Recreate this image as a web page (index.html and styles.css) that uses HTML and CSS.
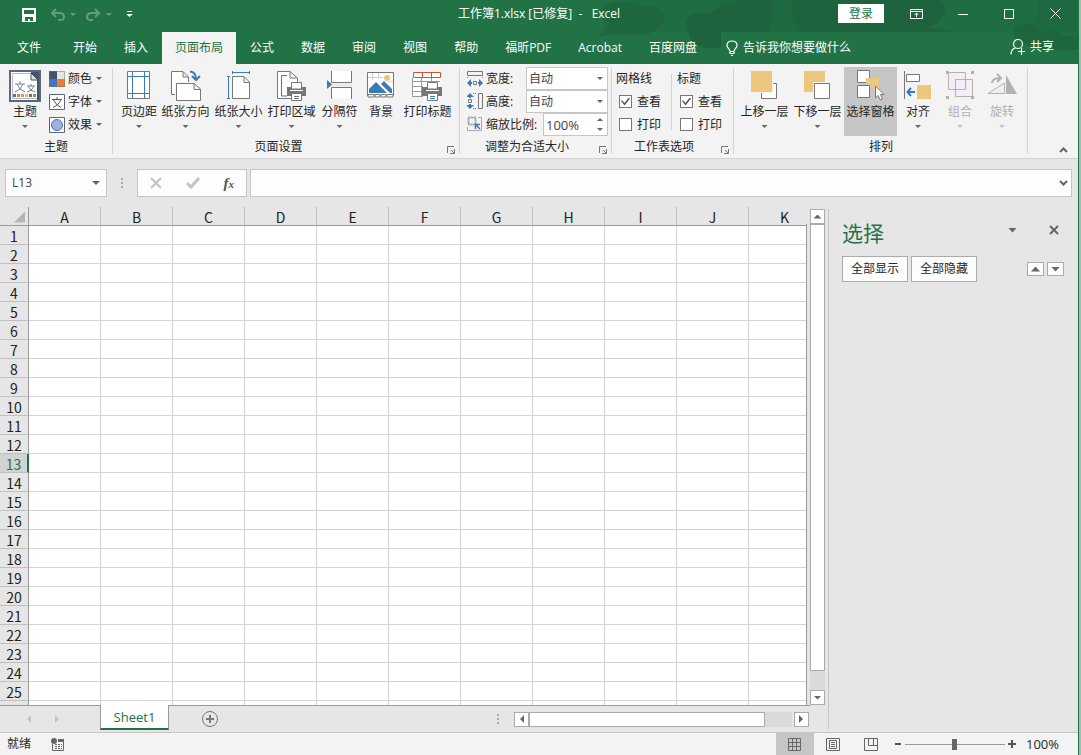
FILE: index.html
```
<!DOCTYPE html>
<html lang="zh-CN">
<head>
<meta charset="utf-8">
<title>工作簿1.xlsx - Excel</title>
<link rel="stylesheet" href="styles.css">
</head>
<body>
<div class="window">
<header class="top">
  <svg class="decor" width="480" height="64" viewBox="0 0 480 64" aria-hidden="true">
    <g fill="#1e633d">
      <path d="M0 34Q10 28 4 14Q6 0 24 0H480V32H0Z" opacity=".35"/>
      <path d="M0 36Q8 30 14 24Q0 18 5 8Q10 0 25 2L60 8Q74 18 58 30Q48 38 20 34Z" opacity=".7"/>
      <path d="M88 22Q92 10 110 14Q125 4 145 0H172Q178 16 170 32H124V48Q96 50 92 38Z"/>
      <path d="M122 0H205Q196 10 201 18Q206 26 208 32H122Z" opacity=".5"/>
      <path d="M196 0H342Q352 8 342 20Q334 31 312 28Q340 26 356 32H206Q188 16 196 0Z"/>
      <path d="M416 36Q414 24 428 24Q440 23 442 34Q458 26 466 36H480V50H448L424 44Z" opacity=".75"/>
      <path d="M440 0H480V50H450Q446 34 432 24Q444 14 440 0Z" opacity=".35"/>
    </g>
    <path d="M123 32H390V64H123Z" fill="#217346"/>
  </svg>
  <div class="titlebar">
    <div class="quick">
      <button aria-label="保存"><svg width="14" height="14" viewBox="0 0 14 14"><path d="M0 0H14V14H0Z" fill="#fff"/><path d="M2 2H12V6H2ZM3 9H11V13H3Z" fill="#217346"/><path d="M6 11H8V13H6Z" fill="#fff"/></svg></button>
      <button class="faded" aria-label="撤消"><svg width="26" height="14" viewBox="0 0 26 14"><path d="M6 1L2 5L6 9M2 5H9Q14 5 14 9Q14 12 10 12H8" fill="none" stroke="#fff" stroke-width="2"/><path d="M20 5H26L23 8Z" fill="#fff"/></svg></button>
      <button class="faded" aria-label="恢复"><svg width="26" height="14" viewBox="0 0 26 14"><path d="M9 1L13 5L9 9M13 5H6Q1 5 1 9Q1 12 5 12H7" fill="none" stroke="#fff" stroke-width="2"/><path d="M20 5H26L23 8Z" fill="#fff"/></svg></button>
      <button aria-label="自定义快速访问工具栏"><svg width="7" height="7" viewBox="0 0 7 7"><path d="M1 0H6V1H1ZM0 3H7L3.500 6Z" fill="#fff"/></svg></button>
    </div>
    <h1>工作簿1.xlsx [已修复]&nbsp; -&nbsp;&nbsp; Excel</h1>
    <div class="wincontrols">
      <button class="login">登录</button>
      <button aria-label="功能区显示选项"><svg width="14" height="12" viewBox="0 0 14 12"><path d="M.5 1.500H12.500V10.500H.5ZM.5 3.500H12.500M6.500 9V5M4.500 7L6.500 5L8.500 7" fill="none" stroke="#fff"/></svg></button>
      <button aria-label="最小化"><svg width="10" height="10"><path d="M0 5.500H10" stroke="#fff"/></svg></button>
      <button aria-label="最大化"><svg width="10" height="10"><path d="M.5 .5H9.500V9.500H.5Z" fill="none" stroke="#fff"/></svg></button>
      <button aria-label="关闭"><svg width="11" height="11"><path d="M.5 .5L10.500 10.500M10.500 .5L.5 10.500" stroke="#fff"/></svg></button>
    </div>
  </div>
  <nav class="tabs">
    <button class="file">文件</button><button>开始</button><button>插入</button><button class="active">页面布局</button><button>公式</button><button>数据</button><button>审阅</button><button>视图</button><button>帮助</button><button>福昕PDF</button><button>Acrobat</button><button>百度网盘</button>
    <button class="tell"><svg width="13" height="17" viewBox="0 0 13 17"><path d="M4 11.500Q4 10 2.500 8.500Q1 7 1 5.500Q1 1 6 1T11 5.500Q11 7 9.500 8.500Q8 10 8 11.500ZM4 11.500V13.500H8V11.500M5 15.500H7" fill="none" stroke="#fff" stroke-width="1.200"/></svg>告诉我你想要做什么</button>
    <button class="share"><svg width="16" height="16" viewBox="0 0 16 16"><circle cx="8" cy="5" r="4.500" fill="none" stroke="#fff" stroke-width="1.200"/><path d="M1 15.500Q1 10 5.500 9M8 12.500H15M11.500 9V16" fill="none" stroke="#fff" stroke-width="1.200"/></svg>共享</button>
  </nav>
</header>

<section class="ribbon">
  <div class="group g-theme">
    <div class="tools">
      <button class="big w34"><svg width="32" height="32" viewBox="0 0 32 32"><path d="M1 1H31V31H1Z" fill="#fff" stroke="#5b677d" stroke-width="2"/><path d="M3.500 3.500H22L28.500 10V28.500H3.500Z" fill="#fff" stroke="#bbb"/><path d="M22 2H30V30H28V10L22 4Z" fill="#44546a"/><path d="M22 3V10H29Z" fill="#dce1e8" stroke="#44546a"/><path d="M6 14H16M11 11V14M14 14Q12 20 6 22M8 14Q10 20 16 22M18 16H26M22 14V16M25 16Q23 21 18 22M19 16Q21 21 26 22" fill="none" stroke="#7a828c"/><path d="M4 24H7V27H4Z" fill="#4472c4"/><path d="M8 24H11V27H8Z" fill="#ed7d31"/><path d="M12 24H15V27H12Z" fill="#a5a5a5"/><path d="M16 24H19V27H16Z" fill="#ffc000"/><path d="M20 24H23V27H20Z" fill="#4472c4"/><path d="M24 24H27V27H24Z" fill="#70ad47"/></svg><span>主题</span><i class="arrow"></i></button>
      <div class="stack">
        <button class="small"><svg width="16" height="16"><path d="M0 0H8V8H0Z" fill="#44546a"/><path d="M8 0H16V8H8Z" fill="#e7e6e6"/><path d="M0 8H8V16H0Z" fill="#4472c4"/><path d="M8 8H16V16H8Z" fill="#ed7d31"/><path d="M.5 .5H15.500V15.500H.5Z" fill="none" stroke="#6b7480" opacity=".5"/></svg>颜色<i class="arrow"></i></button>
        <button class="small"><svg width="16" height="16"><path d="M.5 .5H15.500V15.500H.5Z" fill="#fff" stroke="#5b677d"/><path d="M3 5.500H13M8 3V5M12 6Q10 11 4 13.500M4.500 6Q7 11 12 13.500" fill="none" stroke="#555"/></svg>字体<i class="arrow"></i></button>
        <button class="small"><svg width="16" height="16"><path d="M.5 .5H15.500V15.500H.5Z" fill="#fff" stroke="#5b677d"/><circle cx="8" cy="8" r="5.500" fill="#9fb0e0" stroke="#4472c4"/></svg>效果<i class="arrow"></i></button>
      </div>
    </div>
    <h2>主题</h2>
  </div>

  <div class="group g-page">
    <div class="tools">
      <button class="big w40"><svg width="24" height="30"><path d="M.5 1.500H22.500V28.500H.5Z" fill="#fff" stroke="#777"/><path d="M5.500 2V28M17.500 2V28M1 6.500H22M1 23.500H22" stroke="#3b7ab8"/></svg><span>页边距</span><i class="arrow"></i></button>
      <button class="big w53"><svg width="30" height="32"><path d="M.5 1.500H12L17.500 7V24.500H.5ZM12 2V7H17" fill="#fff" stroke="#777"/><path d="M4 12H18V25H4Z" fill="#f3f3f3"/><path d="M5.500 13.500H23L29.500 19V30.500H5.500ZM23 14V19.500H29" fill="#fff" stroke="#777"/><path d="M19 1.500Q25 2 25 9M21 6L25 10L29 6" fill="none" stroke="#3b7ab8" stroke-width="2"/></svg><span>纸张方向</span><i class="arrow"></i></button>
      <button class="big w53"><svg width="25" height="30"><path d="M6.500 6.500H18L23.500 12V28.500H6.500ZM18 7V12.500H23" fill="#fff" stroke="#777"/><path d="M6 2.500H24M6.500 1V4M23.500 1V4M2.500 6V28M1 6.500H4M1 28.500H4" stroke="#3b7ab8"/></svg><span>纸张大小</span><i class="arrow"></i></button>
      <button class="big w53"><svg width="30" height="32"><path d="M.5 1.500H13L20.500 8V28.500H.5ZM13 2V8H20" fill="#fff" stroke="#777"/><path d="M10 5.500H4.500V26H10" fill="none" stroke="#3b7ab8"/><path d="M10 17H29V26H10Z" fill="#777"/><path d="M14.500 12.500H24.500V19H14.500ZM14.500 23.500H24.500V30.500H14.500Z" fill="#fff" stroke="#777"/><path d="M17 26.500H22M17 28.500H22" stroke="#777"/><path d="M13 20.500H26" stroke="#fff"/></svg><span>打印区域</span><i class="arrow"></i></button>
      <button class="big w43"><svg width="26" height="30"><path d="M4.500 1V12.500H24.500V1M4.500 29V17.500H24.500V29" fill="#fff" stroke="#777"/><path d="M0 10L5 14.500L0 19Z" fill="#3b7ab8"/><path d="M5 15H25" stroke="#ddd"/></svg><span>分隔符</span><i class="arrow"></i></button>
      <button class="big w40"><svg width="28" height="30"><path d="M.5 2.500H26.500V25.500H.5Z" fill="#fff" stroke="#777"/><path d="M5.500 3V10M11.500 3V8M1 7.500H16M22 11.500H26" stroke="#ccc"/><circle cx="20" cy="8" r="3" fill="#edc57b"/><path d="M2 23V19L9 12L20 23ZM14 14L17 11L25 19V23H23Z" fill="#3b7ab8"/><path d="M1 24.500H7V27H1ZM8 24.500H13V27H8ZM14 24.500H19V27H14ZM20 24.500H26V27H20Z" fill="#fff" stroke="#777"/></svg><span>背景</span></button>
      <button class="big w53"><svg width="32" height="32"><path d="M.5 2.500H28.500V26.500H.5Z" fill="#fff"/><path d="M.5 8V26.500H11M1 11.500H28M1 16.500H11M1 21.500H11M9.500 8V26M19.500 8V14" fill="none" stroke="#999"/><path d="M1.500 2.500H28.500V7.500H1.500ZM10.500 3V7M19.500 3V7" fill="#fff" stroke="#d35230"/><path d="M10 17H30V26H10Z" fill="#777"/><path d="M15.500 12.500H25.500V19H15.500ZM15.500 23.500H25.500V30.500H15.500Z" fill="#fff" stroke="#777"/><path d="M18 26.500H23M18 28.500H23" stroke="#3b7ab8"/><path d="M14 20.500H27" stroke="#fff"/></svg><span>打印标题</span></button>
    </div>
    <h2>页面设置</h2>
    <button class="launcher" aria-label="页面设置选项"><svg width="8" height="8"><path d="M.5 7V.5H7M4 4L7 7M7.500 3V7.500H3" fill="none" stroke="#777"/></svg></button>
  </div>

  <div class="group g-fit">
    <div class="tools fit">
      <div class="fitrow"><svg width="17" height="17"><path d="M.5 1.500H15.500V5.500H.5Z" fill="none" stroke="#777"/><path d="M.5 7V9M15.500 7V9" stroke="#777" stroke-dasharray="1 1"/><path d="M6.500 11.500H9.500V14.500H6.500Z" fill="none" stroke="#777"/><path d="M0 13L4 9V12H5V14H4V17ZM16 13L12 9V12H11V14H12V17Z" fill="#3b7ab8"/></svg><label for="fw">宽度:</label><span class="drop"><select id="fw"><option>自动</option></select></span></div>
      <div class="fitrow"><svg width="17" height="17"><path d="M11.500 .5H15.500V15.500H11.500Z" fill="none" stroke="#777"/><path d="M6 .5H10M6 15.500H10" stroke="#777" stroke-dasharray="1 1"/><path d="M1.500 6.500H4.500V9.500H1.500Z" fill="none" stroke="#777"/><path d="M3 0L7 4H4V5H2V4H-1ZM3 16L7 12H4V11H2V12H-1Z" fill="#3b7ab8"/></svg><label for="fh">高度:</label><span class="drop"><select id="fh"><option>自动</option></select></span></div>
      <div class="fitrow"><svg width="17" height="17"><path d="M1.500 1.500H8.500V8.500H1.500Z" fill="none" stroke="#777" stroke-width="2" stroke-dasharray="1 1"/><path d="M11 1.500H14.500V14.500H.5V11" fill="none" stroke="#aaa"/><path d="M13 13L9 9M8.500 13V8.500H13" fill="none" stroke="#3b7ab8" stroke-width="1.500"/></svg><label for="fs">缩放比例:</label><span class="spin"><input id="fs" value="100%"><span class="spinners"><i class="arrow up"></i><i class="arrow"></i></span></span></div>
    </div>
    <h2>调整为合适大小</h2>
    <button class="launcher" aria-label="缩放选项"><svg width="8" height="8"><path d="M.5 7V.5H7M4 4L7 7M7.500 3V7.500H3" fill="none" stroke="#777"/></svg></button>
  </div>

  <div class="group g-opts">
    <div class="tools">
      <div class="checks"><strong>网格线</strong><label><input type="checkbox" checked>查看</label><label><input type="checkbox">打印</label></div>
      <div class="checks second"><strong>标题</strong><label><input type="checkbox" checked>查看</label><label><input type="checkbox">打印</label></div>
    </div>
    <h2>工作表选项</h2>
    <button class="launcher" aria-label="工作表选项"><svg width="8" height="8"><path d="M.5 7V.5H7M4 4L7 7M7.500 3V7.500H3" fill="none" stroke="#777"/></svg></button>
  </div>

  <div class="group g-arrange">
    <div class="tools">
      <button class="big w53"><svg width="27" height="30"><path d="M10.500 13.500H25.500V28.500H10.500Z" fill="#fff" stroke="#777"/><path d="M0 0H22V23H0Z" fill="#f3f3f3"/><path d="M0 1H21V22H0Z" fill="#edc77d"/></svg><span>上移一层</span><i class="arrow"></i></button>
      <button class="big w53"><svg width="27" height="30"><path d="M0 1H21V22H0Z" fill="#edc77d"/><path d="M9 12H27V30H9Z" fill="#f3f3f3"/><path d="M10.500 13.500H25.500V28.500H10.500Z" fill="#fff" stroke="#777"/></svg><span>下移一层</span><i class="arrow"></i></button>
      <button class="big w53 pressed"><svg width="28" height="31"><path d="M.5 .5H12.500V12.500H.5ZM.5 15.500H12.500V27.500H.5Z" fill="#fff" stroke="#777"/><path d="M9 8H22V20H14V14H9Z" fill="#edc77d"/><path d="M18.500 16V28L21 25.500L23.500 30L25.500 29L23.500 24.500H27Z" fill="#fff" stroke="#777"/></svg><span>选择窗格</span></button>
      <button class="big w42"><svg width="28" height="30"><path d="M.5 1V29" stroke="#777"/><path d="M2.500 4.500H15.500V11.500H2.500Z" fill="#fff" stroke="#777"/><path d="M13 15H27V29H13Z" fill="#edc77d"/><path d="M3 22H11M7 18L3.500 22L7 26" fill="none" stroke="#3b7ab8" stroke-width="2"/></svg><span>对齐</span><i class="arrow"></i></button>
      <button class="big w42" disabled><svg width="28" height="30"><path d="M2.500 2.500H19.500V19.500H2.500ZM9.500 9.500H26.500V26.500H9.500Z" fill="#f3eef5" stroke="#b1b1b1"/><path d="M9.500 19V9.500H19.500V19" fill="none" stroke="#b1b1b1"/><path d="M0 1H3V4H0ZM25 1H28V4H25ZM0 26H3V29H0ZM25 26H28V29H25Z" fill="#b1b1b1"/></svg><span>组合</span><i class="arrow"></i></button>
      <button class="big w42" disabled><svg width="30" height="28"><path d="M19 5V24H30Z" fill="#b1b1b1"/><path d="M1 23.500L17.500 13V23.500Z" fill="#f3eef5" stroke="#b1b1b1"/><path d="M5 13Q5 8 14 8M10 4L14 8L10 12" fill="none" stroke="#b1b1b1" stroke-width="2"/></svg><span>旋转</span><i class="arrow"></i></button>
    </div>
    <h2>排列</h2>
  </div>
  <button class="collapse" aria-label="折叠功能区"><svg width="9" height="6"><path d="M1 5L4.500 1.500L8 5" fill="none" stroke="#666" stroke-width="2"/></svg></button>
</section>

<section class="formula">
  <div class="namebox"><input aria-label="名称框" value="L13"><i class="arrow wide"></i></div>
  <i class="dots"></i>
  <div class="fx">
    <button aria-label="取消"><svg width="12" height="12"><path d="M1 1L11 11M11 1L1 11" stroke="#c3c3c3" stroke-width="2"/></svg></button>
    <button aria-label="输入"><svg width="14" height="12"><path d="M1 6L5 10L13 1" fill="none" stroke="#c3c3c3" stroke-width="3"/></svg></button>
    <button class="fn" aria-label="插入函数"><em>f<small>x</small></em></button>
  </div>
  <div class="bar"><input aria-label="编辑栏"><svg width="9" height="6"><path d="M1 1L4.500 4.500L8 1" fill="none" stroke="#666" stroke-width="2"/></svg></div>
</section>

<main class="main">
  <div class="book">
    <div class="gridarea">
      <div class="cells"><table><thead><tr id="cols"></tr></thead><tbody id="rows"></tbody></table></div>
      <div class="vscroll"><button aria-label="向上"><i class="arrow wide up"></i></button><div class="thumb"></div><div class="track"></div><button aria-label="向下"><i class="arrow wide"></i></button></div>
    </div>
    <div class="sheetbar">
      <div class="sheetnav"><svg width="5" height="8"><path d="M5 0V8L1 4Z" fill="#c3c3c3"/></svg><svg width="5" height="8"><path d="M0 0V8L4 4Z" fill="#c3c3c3"/></svg></div>
      <button class="sheet">Sheet1</button>
      <button class="add" aria-label="新工作表"><svg width="16" height="16"><circle cx="8" cy="8" r="7.500" fill="none" stroke="#777"/><path d="M4 8H12M8 4V12" stroke="#777" stroke-width="2"/></svg></button>
      <i class="dots"></i>
      <div class="hscroll"><button aria-label="向左"><svg width="5" height="8"><path d="M5 0V8L1 4Z" fill="#666"/></svg></button><div class="thumb"></div><div class="track"></div><button aria-label="向右"><svg width="5" height="8"><path d="M0 0V8L4 4Z" fill="#666"/></svg></button></div>
    </div>
  </div>
  <aside class="pane">
    <div class="panehead"><h2>选择</h2><button aria-label="任务窗格选项"><i class="arrow large"></i></button><button aria-label="关闭"><svg width="10" height="10"><path d="M1 1L9 9M9 1L1 9" stroke="#666" stroke-width="2"/></svg></button></div>
    <div class="paneacts"><button>全部显示</button><button>全部隐藏</button><span></span><button class="tiny" aria-label="上移"><i class="arrow large up"></i></button><button class="tiny" aria-label="下移"><i class="arrow large"></i></button></div>
  </aside>
</main>

<footer class="status">
  <span class="ready">就绪</span>
  <svg width="14" height="13"><circle cx="3" cy="3" r="3" fill="#666"/><path d="M7 1H13V4H7Z" fill="#666"/><path d="M1.500 6V12.500H12.500V4" fill="none" stroke="#666"/><path d="M4 6.500H11M4 8.500H11M4 10.500H11" stroke="#666" stroke-dasharray="2 1"/></svg>
  <div class="views">
    <button class="on" aria-label="普通"><svg width="13" height="13"><path d="M.5 .5H12.500V12.500H.5ZM4.500 0V13M8.500 0V13M0 4.500H13M0 8.500H13" fill="none" stroke="#666"/></svg></button>
    <button aria-label="页面布局"><svg width="14" height="13"><path d="M.5 .5H13.500V12.500H.5ZM3.500 2.500H10.500V10.500H3.500ZM5 4.500H9M5 6.500H9M5 8.500H9" fill="none" stroke="#666"/></svg></button>
    <button aria-label="分页预览"><svg width="14" height="13"><path d="M.5 .5H13.500V12.500H.5ZM4.500 0V7.500H13M9.500 0V7" fill="none" stroke="#666"/></svg></button>
  </div>
  <button class="step" aria-label="缩小"><svg width="6" height="8"><path d="M0 4H6" stroke="#555" stroke-width="2"/></svg></button>
  <input class="zoom" type="range" min="0" max="100" value="50" aria-label="缩放">
  <button class="step" aria-label="放大"><svg width="8" height="8"><path d="M0 4H8M4 0V8" stroke="#555" stroke-width="2"/></svg></button>
  <span class="pct">100%</span>
</footer>
</div>
<script src="script.js"></script>
</body>
</html>
```
FILE: styles.css
```
* { box-sizing: border-box; }
body { margin: 0; background: #b4b4b4; font: 12px/18px "Open Sans", "Noto Sans CJK SC", sans-serif; color: #262626; }
button, input, select { font: inherit; color: inherit; margin: 0; padding: 0; border: 0; background: none; border-radius: 0; outline: 0; }
h1, h2 { margin: 0; font-weight: 400; font-size: 12px; }
svg { display: block; flex: none; }
.window { height: 100vh; margin-right: 2px; border-right: 1px solid #107c41; display: flex; flex-direction: column; background: #e6e6e6; overflow: hidden; }

.arrow { display: block; flex: none; width: 6px; height: 3px; background: #666; clip-path: polygon(0 0, 100% 0, 50% 100%); }
.arrow.wide { width: 8px; height: 4px; }
.arrow.large { width: 9px; height: 5px; }
.arrow.up { clip-path: polygon(50% 0, 100% 100%, 0 100%); }
.dots { width: 2px; height: 10px; background: repeating-linear-gradient(#aaa 0 2px, transparent 2px 4px); }

.top { position: relative; background: #217346; color: #fff; flex: none; }
.decor { position: absolute; right: 0; top: 0; }
.titlebar { position: relative; height: 32px; display: grid; grid-template-columns: 1fr auto 1fr; align-items: center; }
.quick { display: flex; align-items: center; gap: 14px; padding: 0 0 3px 22px; }
.quick button:nth-child(3) { margin-left: -4px; }
.faded { opacity: .3; }
.titlebar h1 { padding-bottom: 4px; }
.wincontrols { display: flex; align-items: center; justify-content: flex-end; padding-bottom: 5px; }
.wincontrols button { width: 46px; height: 19px; display: flex; align-items: center; justify-content: center; }
.wincontrols .login { background: #fff; color: #217346; margin-right: 10px; }
.tabs { position: relative; display: flex; gap: 1px; height: 32px; }
.tabs button { padding: 0 13px; }
.tabs .file { padding: 0 17px; margin-right: 1px; }
.tabs .active { background: #f3f3f3; color: #217346; }
.tabs .tell, .tabs .share { display: flex; align-items: center; gap: 4px; }
.tabs .tell { margin-left: 10px; padding-left: 5px; }
.tabs .share { margin-left: auto; padding-right: 24px; padding-bottom: 3px; }

.ribbon { flex: none; display: flex; background: #f3f3f3; border-bottom: 1px solid #d2d2d2; height: 95px; position: relative; }
.group { position: relative; display: flex; flex-direction: column; padding: 3px 4px 0; }
.group::after { content: ""; position: absolute; right: 0; top: 4px; bottom: 4px; border-right: 1px solid #d2d2d2; }
.group h2 { text-align: center; line-height: 22px; padding-right: 18px; }
.tools { display: flex; height: 69px; }
.g-theme { width: 113px; padding-left: 8px; }
.g-theme h2 { padding-right: 5px; }
.g-page { width: 347px; padding-left: 6px; }
.g-fit { width: 152px; }
.g-opts { width: 122px; }
.g-arrange { width: 294px; }
.g-arrange h2 { padding-right: 0; }
.big { display: flex; flex: none; flex-direction: column; align-items: center; white-space: nowrap; padding-top: 3px; }
.big svg { margin-bottom: auto; }
.big span { margin-bottom: 4px; }
.big .arrow { margin-bottom: 8px; }
.big span:last-child { margin-bottom: 15px; }
.big:disabled { color: #b1b1b1; }
.big:disabled .arrow { background: #c4c4c4; }
.pressed { background: #c6c6c6; }
.w34 { width: 34px; } .w40 { width: 40px; } .w42 { width: 42px; } .w43 { width: 43px; } .w53 { width: 53px; }
.stack { margin-left: 7px; }
.small { display: flex; align-items: center; height: 23px; gap: 4px; }
.small svg { margin-right: -1px; }
.launcher, .collapse { position: absolute; right: 5px; bottom: 4px; }
.collapse { right: 10px; bottom: 5px; }
.fit { flex-direction: column; padding-left: 3px; }
.fitrow { display: flex; align-items: center; height: 23px; }
.fitrow label { margin-left: 2px; white-space: nowrap; }
.drop, .spin { margin-left: auto; height: 23px; width: 82px; border: 1px solid #c6c6c6; background: #fff; position: relative; color: #444; }
.drop select { appearance: none; width: 100%; height: 21px; padding-left: 2px; }
.drop::after { content: ""; position: absolute; right: 4px; top: 9px; width: 6px; height: 3px; background: #666; clip-path: polygon(0 0, 100% 0, 50% 100%); pointer-events: none; }
.spin { width: 65px; display: flex; align-items: center; }
.spin input { width: 50px; padding-left: 2px; font-size: 13px; }
.spinners { margin-left: auto; padding-right: 4px; display: grid; gap: 7px; }
.checks { width: 57px; }
.checks.second { margin-left: 4px; padding-left: 2px; position: relative; }
.checks.second::before { content: ""; position: absolute; left: -4px; top: 7px; height: 56px; border-left: 1px solid #d2d2d2; }
.checks strong { display: block; font-weight: 400; line-height: 23px; }
.checks label { display: flex; align-items: center; gap: 5px; height: 23px; padding-left: 3px; white-space: nowrap; }
.checks input { appearance: none; width: 13px; height: 13px; border: 1px solid #777; background: #fff; display: grid; place-items: center; }
.checks input:checked::before { content: ""; width: 9px; height: 8px; background: #555; clip-path: polygon(0 45%, 12% 35%, 38% 70%, 88% 0, 100% 12%, 40% 100%); }

.formula { flex: none; display: flex; align-items: center; height: 48px; padding: 0 6px 0 5px; }
.namebox, .fx, .bar { display: flex; align-items: center; height: 28px; border: 1px solid #c6c6c6; background: #fdfdfd; }
.namebox { width: 102px; padding: 0 6px; color: #444; }
.namebox input { flex: 1; min-width: 0; }
.formula .dots { margin: 0 14px; }
.fx { width: 110px; justify-content: space-around; }
.fn { font: 15px/18px "Liberation Serif", serif; color: #555; }
.fn em { font-weight: 700; }
.fn small { font-size: 11px; }
.bar { flex: 1; margin-left: 3px; padding: 0 3px; }
.bar input { flex: 1; min-width: 0; }

.main { flex: 1; min-height: 0; display: flex; }
.book { flex: 1; min-width: 0; display: flex; flex-direction: column; }
.gridarea { flex: 1; min-height: 0; display: flex; }
.cells { flex: 1; overflow: hidden; border-right: 1px solid; border-image: linear-gradient(#e6e6e6 18px, #999 18px) 1; }
table { table-layout: fixed; width: 821px; border-spacing: 0; background: #fff; }
th, td { height: 19px; padding: 0; border: 0 solid #d4d4d4; border-width: 0 1px 1px 0; }
th { font: 14px/16px "Noto Sans CJK SC", sans-serif; background: #e6e6e6; width: 72px; color: #222; padding-top: 2px; }
thead th { border-color: #bdbdbd #bdbdbd #999; }
th:first-child { width: 29px; border-right-color: #999; }
tbody th { border-bottom-color: #c0c0c0; }
.corner::after { content: ""; display: block; width: 11px; height: 11px; margin-left: 14px; background: #b4b4b4; clip-path: polygon(100% 0, 100% 100%, 0 100%); }
tbody th.here { background: #d2d2d2; color: #217346; border-right: 2px solid #217346; }
.vscroll { width: 15px; margin: 2px 3px 0; display: flex; flex-direction: column; }
.vscroll button, .hscroll button { flex: none; width: 15px; height: 15px; display: grid; place-items: center; background: #fff; border: 1px solid #ababab; }
.thumb { background: #fff; border: 1px solid #ababab; }
.track { background: #dadada; }
.vscroll .thumb { flex: 1; }
.vscroll .track { height: 19px; }
.sheetbar { flex: none; height: 27px; display: flex; align-items: center; border-top: 1px solid #999; margin-right: 18px; padding-right: 1px; }
.sheetnav { width: 100px; display: flex; gap: 24px; padding-left: 26px; }
.sheet { align-self: flex-start; height: 25px; margin-top: -1px; width: 69px; background: #fff; color: #217346; border: 1px solid #999; border-width: 0 1px 2px; border-bottom-color: #217346; font-size: 13px; }
.add { margin: 0 auto 0 33px; }
.hscroll { display: flex; margin-left: 15px; width: 295px; }
.hscroll .thumb { flex: 1; }
.hscroll .track { width: 27px; margin-right: 2px; }
.pane { width: 250px; flex: none; border-left: 1px solid #c6c6c6; margin: 2px 0 3px; padding: 11px 14px 0 13px; }
.panehead { display: flex; align-items: center; height: 28px; }
.panehead h2 { font-size: 21px; line-height: 26px; padding-bottom: 2px; color: #217346; margin-right: auto; }
.panehead button { padding-bottom: 8px; margin-left: 32px; }
.panehead button:last-child { margin-right: 5px; }
.paneacts { display: flex; align-items: center; gap: 3px; margin-top: 8px; }
.paneacts button { height: 26px; width: 66px; background: #fdfdfd; border: 1px solid #ababab; }
.paneacts span { flex: 1; }
.paneacts .tiny { width: 17px; height: 14px; display: grid; place-items: center; }

.status { flex: none; height: 23px; display: flex; align-items: center; background: #f3f3f3; border-top: 1px solid #c6c6c6; padding: 0 19px 0 7px; }
.ready { margin-right: 20px; }
.views { margin-left: auto; display: flex; height: 22px; margin-right: 5px; }
.views button { width: 38px; display: grid; place-items: center; }
.views .on { background: #c6c6c6; }
.zoom { appearance: none; width: 100px; height: 11px; margin: 0 3px 0 4px; background: linear-gradient(#999, #999) center / 100% 1px no-repeat; }
.zoom::-webkit-slider-thumb { appearance: none; width: 5px; height: 11px; background: #666; }
.pct { margin-left: 10px; font-size: 13px; }
```
FILE: script.js
```
const cols = document.getElementById('cols');
const rows = document.getElementById('rows');
const letters = 'ABCDEFGHIJK';
const lastRow = 25;
cols.innerHTML = '<th class="corner"></th>' + [...letters].map(c => `<th>${c}</th>`).join('');
const cells = '<td></td>'.repeat(letters.length);
let html = '';
for (let r = 1; r <= lastRow; r++) {
  html += `<tr><th${r === 13 ? ' class="here"' : ''}>${r}</th>${cells}</tr>`;
}
rows.innerHTML = html + `<tr><th></th>${cells}</tr>`;
```
